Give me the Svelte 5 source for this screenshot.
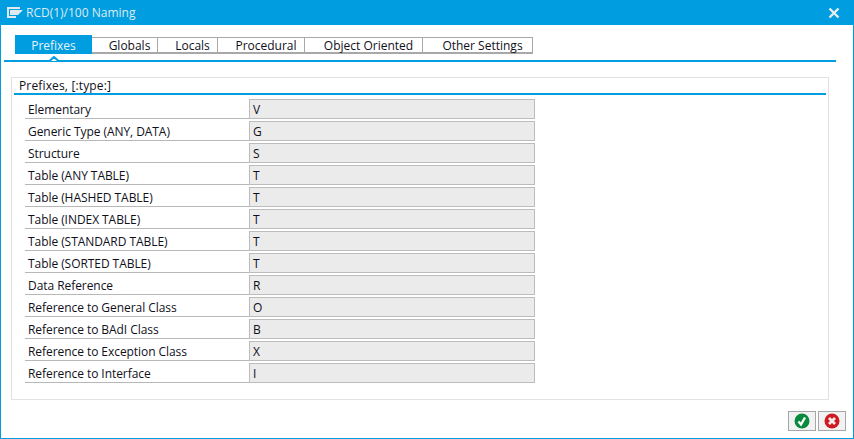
<script>
    const tabs = ['Prefixes', 'Globals', 'Locals', 'Procedural', 'Object Oriented', 'Other Settings'];

    const rows = [
        ['Elementary', 'V'],
        ['Generic Type (ANY, DATA)', 'G'],
        ['Structure', 'S'],
        ['Table (ANY TABLE)', 'T'],
        ['Table (HASHED TABLE)', 'T'],
        ['Table (INDEX TABLE)', 'T'],
        ['Table (STANDARD TABLE)', 'T'],
        ['Table (SORTED TABLE)', 'T'],
        ['Data Reference', 'R'],
        ['Reference to General Class', 'O'],
        ['Reference to BAdI Class', 'B'],
        ['Reference to Exception Class', 'X'],
        ['Reference to Interface', 'I']
    ];
</script>

<div class="window">
    <header class="titlebar">
        <svg class="title-icon" width="16" height="11" viewBox="0 0 16 11">
            <path d="M0 0h13v2H2v7h7v2H0z" fill="#dfe9ef" />
            <path d="M3 3h13l-5 5H3z" fill="#dfe9ef" />
        </svg>
        <span class="title">RCD(1)/100 Naming</span>
        <svg class="close" width="12" height="12" viewBox="0 0 12 12">
            <path d="M1.5 1.5l9 9M10.5 1.5l-9 9" stroke="#e6eef2" stroke-width="2.4" fill="none" />
        </svg>
    </header>

    <div class="body">
        <nav class="tabs">
            {#each tabs as tab, i}
                <div class="tab tab-{i}" class:active={i === 0}>{tab}</div>
            {/each}
        </nav>
        <div class="tab-line">
            <svg class="notch" width="12" height="6" viewBox="0 0 12 6">
                <path d="M0 5h1.5L6 1l4.500 4H12" fill="#fff" stroke="#009de0" stroke-width="2" />
            </svg>
        </div>

        <section class="group">
            <h2 class="group-title">Prefixes, [:type:]</h2>
            <div class="rows">
                {#each rows as row}
                    <div class="row">
                        <div class="label">{row[0]}</div>
                        <div class="value">{row[1]}</div>
                    </div>
                {/each}
            </div>
        </section>

        <footer class="actions">
            <button class="btn" aria-label="OK">
                <svg width="16" height="16" viewBox="0 0 16 16">
                    <circle cx="8" cy="8" r="7.500" fill="#0a8a3c" />
                    <path d="M4.500 8.500l2.500 3 4-7" stroke="#fff" stroke-width="2.400" fill="none" />
                </svg>
            </button>
            <button class="btn" aria-label="Cancel">
                <svg width="16" height="16" viewBox="0 0 16 16">
                    <circle cx="8" cy="8" r="7.500" fill="#cf1a22" />
                    <path d="M5 5l6 6M11 5l-6 6" stroke="#f4eeee" stroke-width="2.800" fill="none" />
                </svg>
            </button>
        </footer>
    </div>
</div>

<style>
    :global(body) {
        margin: 0;
        background: #fff;
    }

    .window {
        width: 854px;
        height: 439px;
        box-sizing: border-box;
        border: 1px solid #009de0;
        border-top: 0;
        font-family: "Open Sans", "Noto Sans", sans-serif;
        font-size: 12px;
        color: #10101a;
        overflow: hidden;
    }

    .titlebar {
        height: 25px;
        margin: 0 -1px;
        background: #009de0;
        display: flex;
        align-items: center;
        padding: 0 14px 0 7px;
        color: #dcebf3;
    }

    .title-icon {
        margin-right: 3px;
    }

    .title {
        flex: 1;
    }

    .body {
        padding-top: 10px;
    }

    .tabs {
        display: flex;
        height: 19px;
        margin-left: 14px;
    }

    .tab {
        box-sizing: border-box;
        border: 1px solid #a8a8a8;
        border-left: 0;
        border-bottom-width: 2px;
        margin-top: 2px;
        padding-left: 10px;
        height: 17px;
        line-height: 15px;
        text-align: center;
        color: #10101a;
    }

    .tab.active {
        background: #009de0;
        color: #e8f4fa;
        border: 0;
        margin-top: 0;
        padding-left: 0;
        height: 19px;
        line-height: 21px;
    }

    .tab-0 { width: 77px; }
    .tab-1 { width: 66px; }
    .tab-2 { width: 60px; }
    .tab-3 { width: 87px; }
    .tab-4 { width: 118px; }
    .tab-5 { width: 110px; }

    .tab-line {
        position: relative;
        height: 2px;
        margin: 6px 17px 0 3px;
        background: #009de0;
    }

    .notch {
        position: absolute;
        left: 44px;
        top: -4px;
    }

    .group {
        margin: 15px 24px 0 10px;
        height: 323px;
        box-sizing: border-box;
        border: 1px solid #e2e2e2;
        padding: 0 2px;
    }

    .group-title {
        margin: 0;
        height: 17px;
        box-sizing: border-box;
        border-bottom: 2px solid #009de0;
        padding-left: 5px;
        font-size: 12px;
        font-weight: normal;
        line-height: 15px;
        letter-spacing: 0.15px;
    }

    .rows {
        padding: 4px 0 0 11px;
    }

    .row {
        display: flex;
        height: 22px;
    }

    .label {
        width: 224px;
        height: 20px;
        box-sizing: border-box;
        border-bottom: 1px solid #b8b8b8;
        padding-left: 3px;
        line-height: 22px;
        letter-spacing: -0.06px;
    }

    .value {
        width: 286px;
        height: 20px;
        box-sizing: border-box;
        background: #ebebeb;
        border: 1px solid #bcbcbc;
        padding-left: 3px;
        line-height: 20px;
    }

    .actions {
        display: flex;
        justify-content: flex-end;
        gap: 2px;
        margin: 11px 7px 0 0;
    }

    .btn {
        width: 28px;
        height: 20px;
        padding: 0;
        box-sizing: border-box;
        background: #f2f2f2;
        border: 1px solid #a6a6a6;
        display: flex;
        align-items: center;
        justify-content: center;
    }
</style>
